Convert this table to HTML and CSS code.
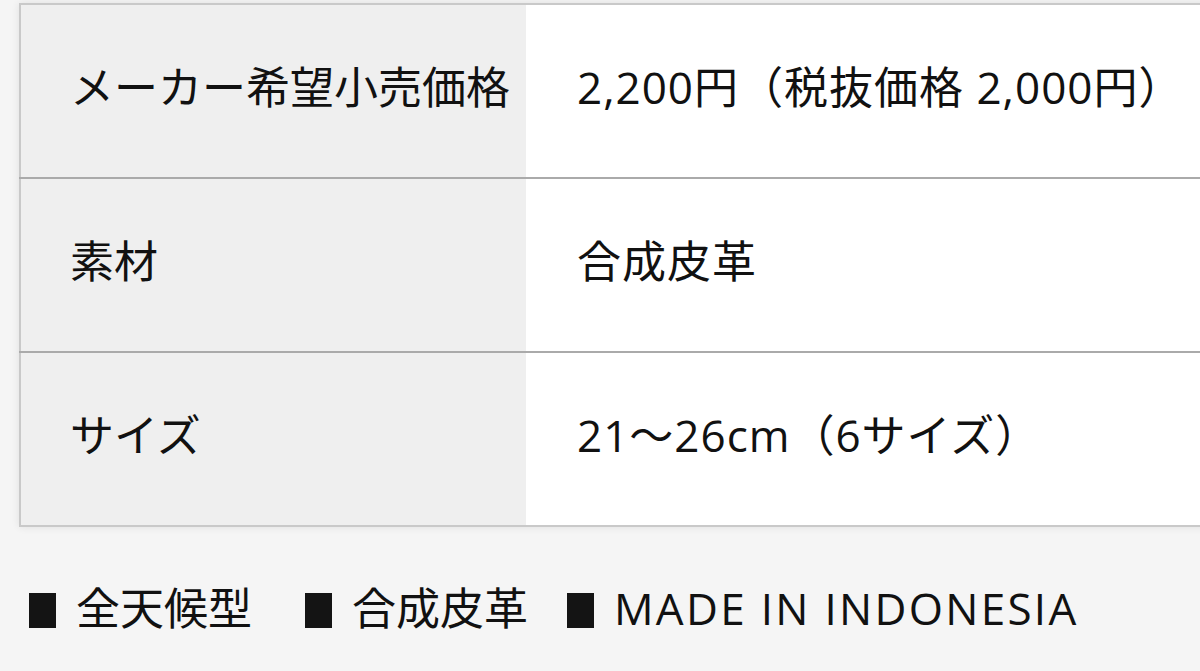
FILE: index.html
```html
<!DOCTYPE html>
<html lang="ja">
<head>
<meta charset="utf-8">
<title>商品仕様</title>
<link rel="stylesheet" href="styles.css">
</head>
<body>
<div class="page">
  <table class="spec">
    <tr>
      <th>メーカー希望小売価格</th>
      <td>2,200円（税抜価格 2,000円）</td>
    </tr>
    <tr>
      <th>素材</th>
      <td>合成皮革</td>
    </tr>
    <tr>
      <th>サイズ</th>
      <td>21～26cm（6サイズ）</td>
    </tr>
  </table>
  <ul class="features">
    <li class="first"><span class="mark"></span>全天候型</li>
    <li><span class="mark"></span>合成皮革</li>
    <li class="latin"><span class="mark"></span>MADE IN INDONESIA</li>
  </ul>
</div>
</body>
</html>
```

FILE: styles.css
```css
html, body {
  margin: 0;
  padding: 0;
  background: #f5f5f5;
  overflow: hidden;
}
body {
  width: 1200px;
  height: 671px;
  font-family: "Open Sans", "Noto Sans CJK JP", sans-serif;
  color: #111;
}
.page {
  padding: 3px 0 0 19px;
}
.spec {
  border-collapse: collapse;
  width: 1300px;
  border: 2px solid #c9c9c9;
  box-shadow: 0 0 8px rgba(0, 0, 0, 0.09);
  font-size: 44px;
  line-height: 1;
}
.spec tr {
  height: 174px;
}
.spec tr + tr th,
.spec tr + tr td {
  border-top: 2px solid #aaaaaa;
}
.spec th {
  width: 506px;
  box-sizing: border-box;
  padding: 0 0 8px 49px;
  background: #efefef;
  text-align: left;
  font-weight: normal;
  vertical-align: middle;
}
.spec td {
  background: #fff;
  padding: 0 0 8px 51px;
  vertical-align: middle;
  white-space: nowrap;
  letter-spacing: 1px;
}
.features {
  list-style: none;
  margin: 0;
  padding: 18px 0 0 10px;
  height: 125px;
  display: flex;
  align-items: center;
  gap: 39px;
  font-size: 44px;
  line-height: 1;
}
.features li {
  display: flex;
  align-items: center;
  gap: 20px;
  white-space: nowrap;
}
.features li.first {
  margin-right: 14px;
}
.features li.latin {
  letter-spacing: 2.3px;
}
.mark {
  display: inline-block;
  width: 27px;
  height: 35px;
  margin-top: 6px;
  background: #141414;
}
```
